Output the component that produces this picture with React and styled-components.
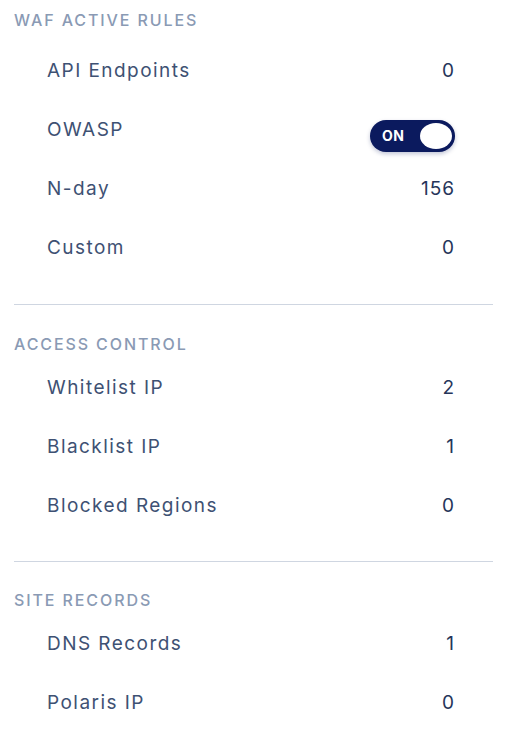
import styled, { createGlobalStyle } from "styled-components";

const GlobalStyle = createGlobalStyle`
  html, body {
    margin: 0;
    padding: 0;
    background: #ffffff;
  }
  body {
    font-family: Inter, "Noto Sans", sans-serif;
  }
`;

const Panel = styled.div`
  width: 511px;
  padding: 0 18px 0 14px;
  box-sizing: border-box;
`;

const Section = styled.section`
  padding-top: ${(p) => (p.first ? "10px" : "28.5px")};
  padding-bottom: ${(p) => (p.first ? "27px" : "26px")};
  border-bottom: ${(p) => (p.last ? "none" : "1px solid #cfd6e1")};
`;

const SectionTitle = styled.h3`
  margin: 0 0 ${(p) => (p.first ? "11px" : "4px")};
  height: 20px;
  line-height: 20px;
  font-size: 16px;
  font-weight: 500;
  letter-spacing: 1.9px;
  color: #8a9ab4;
  text-transform: uppercase;
  white-space: nowrap;
`;

const Row = styled.div`
  display: flex;
  align-items: center;
  justify-content: space-between;
  height: 59px;
  padding-left: 33px;
  padding-right: 39px;
`;

const Label = styled.span`
  font-size: 19px;
  color: #3e5173;
  letter-spacing: 1.45px;
  white-space: nowrap;
`;

const Value = styled.span`
  font-size: 19px;
  color: #26355a;
  letter-spacing: 1px;
  margin-right: -1px;
`;

const Toggle = styled.div`
  display: flex;
  align-items: center;
  justify-content: space-between;
  width: 85px;
  height: 32px;
  box-sizing: border-box;
  padding: 0 3px 0 12px;
  margin: 12px -1px 0 0;
  border-radius: 16px;
  background: #0b1a5e;
  box-shadow: 0 2px 4px rgba(11, 26, 94, 0.25);
`;

const ToggleText = styled.span`
  font-size: 14px;
  font-weight: 700;
  letter-spacing: 0.5px;
  color: #ffffff;
`;

const Knob = styled.span`
  width: 32px;
  height: 26px;
  border-radius: 50%;
  background: #ffffff;
`;

const sections = [
  {
    title: "WAF Active Rules",
    rows: [
      { label: "API Endpoints", value: 0 },
      { label: "OWASP", toggle: true },
      { label: "N-day", value: 156 },
      { label: "Custom", value: 0 },
    ],
  },
  {
    title: "Access Control",
    rows: [
      { label: "Whitelist IP", value: 2 },
      { label: "Blacklist IP", value: 1 },
      { label: "Blocked Regions", value: 0 },
    ],
  },
  {
    title: "Site Records",
    rows: [
      { label: "DNS Records", value: 1 },
      { label: "Polaris IP", value: 0 },
    ],
  },
];

export default function App() {
  return (
    <>
      <GlobalStyle />
      <Panel>
        {sections.map((section, i) => (
          <Section
            key={section.title}
            first={i === 0}
            last={i === sections.length - 1}
          >
            <SectionTitle first={i === 0}>{section.title}</SectionTitle>
            {section.rows.map((row) => (
              <Row key={row.label}>
                <Label>{row.label}</Label>
                {row.toggle ? (
                  <Toggle>
                    <ToggleText>ON</ToggleText>
                    <Knob />
                  </Toggle>
                ) : (
                  <Value>{row.value}</Value>
                )}
              </Row>
            ))}
          </Section>
        ))}
      </Panel>
    </>
  );
}
